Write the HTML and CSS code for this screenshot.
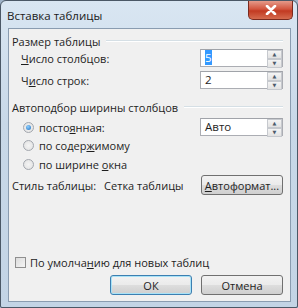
FILE: index.html
```html
<!DOCTYPE html>
<html lang="ru">
<head>
  <meta charset="UTF-8" />
  <title>Вставка таблицы</title>
  <link rel="stylesheet" href="styles.css">
</head>
<body>
  <div class="window">
    <div class="titlebar">
      <span class="title">Вставка таблицы</span>
      <div class="close">
        <svg width="14" height="10" viewBox="0 0 14 10">
          <path d="M3 1 L11 9 M11 1 L3 9" stroke="#fff" stroke-width="2.6" stroke-linecap="round" />
        </svg>
      </div>
    </div>

    <div class="client">
      <div class="group-title"><span>Размер таблицы</span><i class="rule"></i></div>
      <div class="row indent">
        <span><u>Ч</u>исло столбцов:</span>
        <div class="spin"><span class="value"><em>5</em></span><div class="arrows"><b>&#9650;</b><b>&#9660;</b></div></div>
      </div>
      <div class="row indent">
        <span>Ч<u>и</u>сло строк:</span>
        <div class="spin"><span class="value">2</span><div class="arrows"><b>&#9650;</b><b>&#9660;</b></div></div>
      </div>

      <div class="group-title second"><span>Автоподбор ширины столбцов</span><i class="rule"></i></div>
      <div class="row radio-row">
        <span class="option"><i class="radio checked"></i><span>посто<u>я</u>нная:</span></span>
        <div class="spin"><span class="value">Авто</span><div class="arrows"><b>&#9650;</b><b>&#9660;</b></div></div>
      </div>
      <div class="option line"><i class="radio"></i><span>по содер<u>ж</u>имому</span></div>
      <div class="option line"><i class="radio"></i><span>по ширине <u>о</u>кна</span></div>

      <div class="row style-row">
        <span>Стиль таблицы:<span class="style-name">Сетка таблицы</span></span>
        <button class="button"><u>А</u>втоформат...</button>
      </div>

      <div class="spacer"></div>

      <div class="option check-line"><i class="check"></i><span>По умолча<u>н</u>ию для новых таблиц</span></div>
      <div class="actions">
        <button class="button default">ОК</button>
        <button class="button">Отмена</button>
      </div>
    </div>
  </div>
</body>
</html>
```

FILE: styles.css
```css
body {
  margin: 0;
  font-family: 'Open Sans', 'DejaVu Sans', sans-serif;
  font-size: 11px;
  color: #1e1e1e;
  background: #9fb3c8;
}
u {
  text-decoration: underline;
}
.window {
  width: 296px;
  height: 306px;
  border: 1px solid #4b5866;
  border-radius: 6px 6px 2px 2px;
  background: linear-gradient(180deg, #d9e6f2 0%, #c8d8e8 40%, #c3d4e5 100%);
  display: flex;
  flex-direction: column;
}
.titlebar {
  height: 27px;
  display: flex;
  align-items: flex-start;
  justify-content: space-between;
  padding-left: 6px;
}
.title {
  margin-top: 7px;
  font-size: 11.5px;
  color: #1a1a1a;
}
.close {
  width: 43px;
  height: 18px;
  margin-right: 4px;
  border: 1px solid #7a2a1e;
  border-top: none;
  border-radius: 0 0 5px 5px;
  background: linear-gradient(180deg, #e59a8a 0%, #d2553e 45%, #c23a22 55%, #d56b4e 100%);
  display: flex;
  align-items: center;
  justify-content: center;
}
.client {
  flex: 1;
  margin: 0 6px 5px 7px;
  border: 1px solid #8a9cb0;
  background: #f0f0f0;
  padding: 4px 7px 6px 3px;
  display: flex;
  flex-direction: column;
}
.group-title {
  display: flex;
  align-items: center;
  height: 16px;
}
.group-title.second {
  margin-top: 10px;
}
.rule {
  flex: 1;
  margin-left: 6px;
  border-top: 1px solid #d5dfe5;
  border-bottom: 1px solid #fff;
}
.row {
  display: flex;
  align-items: center;
  justify-content: space-between;
}
.indent {
  padding-left: 9px;
}
.indent + .indent {
  margin-top: 4px;
}
.spin {
  width: 83px;
  height: 18px;
  box-sizing: border-box;
  border: 1px solid #abadb3;
  border-top-color: #a0a3a9;
  background: #fff;
  display: flex;
}
.spin .value {
  flex: 1;
  padding-left: 4px;
  line-height: 16px;
  font-size: 11.5px;
}
.spin em {
  font-style: normal;
  background: #3399ff;
  color: #fff;
}
.arrows {
  width: 15px;
  display: flex;
  flex-direction: column;
}
.arrows b {
  flex: 1;
  font-size: 5px;
  line-height: 7px;
  text-align: center;
  color: #4d5b6b;
  background: linear-gradient(180deg, #f4f4f4, #e2e2e2);
  border: 1px solid #c6c9ce;
  font-weight: normal;
}
.radio-row {
  margin-top: 3px;
  padding-left: 11px;
}
.option {
  display: flex;
  align-items: center;
}
.line {
  padding-left: 11px;
  height: 19px;
}
.radio {
  width: 11px;
  height: 11px;
  box-sizing: border-box;
  border-radius: 50%;
  border: 1px solid #a3a7ae;
  background: radial-gradient(circle, #f4f4f4 0%, #e0e0e0 100%);
  margin-right: 5px;
  position: relative;
}
.radio.checked::after {
  content: "";
  position: absolute;
  left: 2px;
  top: 2px;
  width: 5px;
  height: 5px;
  border-radius: 50%;
  background: radial-gradient(circle at 40% 35%, #8fd0ff, #1f6fc0);
}
.style-row {
  margin-top: 1px;
}
.style-name {
  margin-left: 8px;
}
.button {
  font-family: inherit;
  font-size: 11px;
  color: #1e1e1e;
  width: 82px;
  height: 20px;
  padding: 0;
  border: 1px solid #707070;
  border-radius: 3px;
  background: linear-gradient(180deg, #f2f2f2 0%, #ebebeb 48%, #dddddd 52%, #cfcfcf 100%);
}
.button.default {
  border-color: #3c7fb1;
  box-shadow: inset 0 0 0 1px #a8e2f7;
}
.spacer {
  flex: 1;
}
.check-line {
  padding-left: 3px;
}
.check {
  width: 11px;
  height: 11px;
  box-sizing: border-box;
  border: 1px solid #8f8f8f;
  background: linear-gradient(135deg, #dcdcdc, #f5f5f5);
  margin-right: 4px;
}
.actions {
  display: flex;
  justify-content: flex-end;
  gap: 9px;
  margin-top: 5px;
}
```
